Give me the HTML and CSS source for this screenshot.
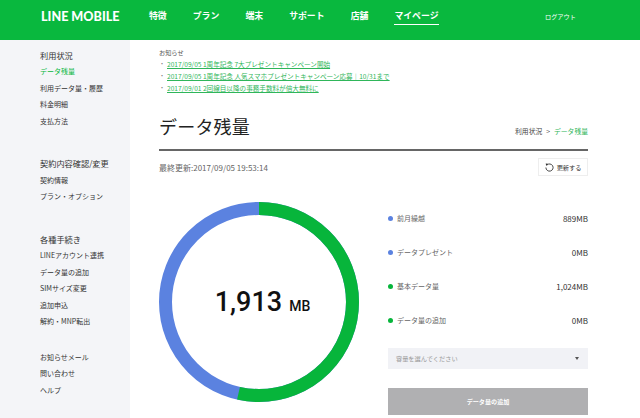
FILE: index.html
```
<!DOCTYPE html>
<html lang="ja">
<head>
<meta charset="utf-8">
<title>データ残量</title>
<link rel="stylesheet" href="styles.css">
</head>
<body>
<header class="header">
  <div class="logo">LINE MOBILE</div>
  <nav class="nav">
    <a>特徴</a><a>プラン</a><a>端末</a><a>サポート</a><a>店舗</a><a class="nav-active">マイページ</a>
  </nav>
  <a class="logout">ログアウト</a>
</header>
<div class="page">
  <aside class="side">
    <section class="side-group">
      <h3>利用状況</h3>
      <a class="cur">データ残量</a><a>利用データ量・履歴</a><a>料金明細</a><a>支払方法</a>
    </section>
    <section class="side-group">
      <h3>契約内容確認/変更</h3>
      <a>契約情報</a><a>プラン・オプション</a>
    </section>
    <section class="side-group side-forms">
      <h3>各種手続き</h3>
      <a>LINEアカウント連携</a><a>データ量の追加</a><a>SIMサイズ変更</a><a>追加申込</a><a>解約・MNP転出</a>
    </section>
    <section class="side-group">
      <a>お知らせメール</a><a>問い合わせ</a><a>ヘルプ</a>
    </section>
  </aside>
  <main class="main">
    <div class="notice">
      <p class="notice-title">お知らせ</p>
      <ul>
        <li><a>2017/09/05 1周年記念 7大プレゼントキャンペーン開始</a></li>
        <li><a>2017/09/05 1周年記念 人気スマホプレゼントキャンペーン応募｜10/31まで</a></li>
        <li><a>2017/09/01 2回線目以降の事務手数料が倍大無料に</a></li>
      </ul>
    </div>
    <div class="title-row">
      <h1>データ残量</h1>
      <div class="crumb"><span>利用状況</span><span class="sep">&gt;</span><span class="crumb-cur">データ残量</span></div>
    </div>
    <div class="update-row">
      <span>最終更新:2017/09/05 19:53:14</span>
      <button class="refresh">
        <svg width="9" height="9" viewBox="0 0 10 10"><path d="M2.2 2.2A4 4 0 1 1 1 5" fill="none" stroke="#333" stroke-width="1"/><path d="M0.8 0.6 L3.4 0.9 L1.4 3.2Z" fill="#333"/></svg>
        更新する
      </button>
    </div>
    <div class="data">
      <div class="ring">
        <svg width="200" height="200" viewBox="0 0 200 200">
          <circle cx="100" cy="100" r="93.5" fill="none" stroke="#5b82e0" stroke-width="13"/>
          <circle cx="100" cy="100" r="93.5" fill="none" stroke="#07b53b" stroke-width="13" pathLength="1913" stroke-dasharray="1024 889" transform="rotate(-90 100 100)"/>
        </svg>
        <div class="total"><div class="total-inner"><b>1,913</b><span>MB</span></div></div>
      </div>
      <div class="panel">
        <div class="row"><span class="dot blue"></span><span class="label">前月繰越</span><span class="val">889MB</span></div>
        <div class="row"><span class="dot blue"></span><span class="label">データプレゼント</span><span class="val">0MB</span></div>
        <div class="row"><span class="dot green"></span><span class="label">基本データ量</span><span class="val">1,024MB</span></div>
        <div class="row"><span class="dot green"></span><span class="label">データ量の追加</span><span class="val">0MB</span></div>
        <div class="select"><span>容量を選んでください</span><i class="caret"></i></div>
        <div class="add">データ量の追加</div>
      </div>
    </div>
  </main>
</div>
</body>
</html>
```
FILE: styles.css
```
* { box-sizing: border-box; }
html, body { margin: 0; height: 418px; overflow: hidden; background: #fff; }
body { font-family: "Noto Sans CJK JP", "Noto Sans", sans-serif; color: #333; font-size: 8px; }
h1, h3, p, ul { margin: 0; padding: 0; }
.header { height: 40px; background: #09b83e; display: flex; align-items: center; color: #fff; padding: 0 0 8px 41px; }
.logo { font-family: "Lato", sans-serif; font-weight: 900; font-size: 12.6px; width: 108px; white-space: nowrap; }
.nav { display: flex; gap: 26px; font-size: 8.9px; font-weight: 700; width: 396px; }
.nav a { line-height: 14px; padding-bottom: 1px; margin-top: 1px; }
.nav .nav-active { border-bottom: 1px solid #fff; }
.logout { font-size: 6.2px; }
.page { display: flex; height: 378px; }
.side { width: 130px; background: #f4f5f8; padding: 7.5px 0 0 40px; display: flex; flex-direction: column; }
.side-group { display: flex; flex-direction: column; margin-bottom: 27px; }
.side-forms { margin-bottom: 19.25px; }
.side-group h3 { font-size: 8.2px; font-weight: 400; line-height: 14px; margin-bottom: 1.5px; color: #333; }
.side-group a { font-size: 7px; line-height: 16.5px; color: #333; white-space: nowrap; }
.side-group .cur { color: #09b83e; }
.main { flex: 1; padding: 7px 52px 0 29px; min-width: 0; }
.notice-title { font-size: 6.2px; line-height: 11px; color: #555; }
.notice ul { list-style: none; margin-top: 0; }
.notice li { font-size: 6.6px; line-height: 12px; padding-left: 8px; position: relative; color: #2fb65a; white-space: nowrap; }
.notice li::before { content: "・"; position: absolute; left: 0; font-size: 6px; color: #777; }
.notice a { text-decoration: underline; }
.title-row { display: flex; justify-content: space-between; align-items: flex-start; margin-top: 17px; height: 38px; }
h1 { font-size: 18px; font-weight: 400; color: #222; line-height: 30px; letter-spacing: 0.2px; }
.crumb { font-size: 6.8px; color: #444; line-height: 10px; margin-top: 15px; display: flex; gap: 4px; }
.crumb-cur { color: #2fb65a; }
.update-row { border-top: 2px solid #666; padding-top: 7px; display: flex; justify-content: space-between; align-items: center; font-size: 8px; color: #666; }
.refresh { width: 50px; height: 18px; border: 1px solid #eee; background: #fff; font: inherit; font-size: 6.2px; color: #333; display: flex; align-items: center; justify-content: center; gap: 3px; padding: 0; }
.data { display: flex; margin-top: 26px; }
.ring { width: 200px; height: 200px; position: relative; flex: none; }
.ring svg { display: block; }
.total { position: absolute; inset: 0; display: flex; align-items: center; justify-content: center; color: #111; padding-left: 7px; }
.total-inner { display: flex; align-items: baseline; gap: 7px; font-family: "Roboto", sans-serif; }
.total b { font-weight: 500; font-size: 27px; }
.total span { font-size: 14px; font-weight: 500; }
.panel { margin-left: 29px; width: 200px; flex: none; display: flex; flex-direction: column; gap: 2px; }
.row { display: flex; align-items: center; height: 32px; font-size: 7px; }
.dot { width: 5px; height: 5px; border-radius: 50%; margin-right: 4px; }
.blue { background: #5b82e0; }
.green { background: #07b53b; }
.label { color: #666; flex: 1; }
.val { color: #333; font-size: 8px; }
.select { height: 21px; background: #f1f2f6; margin-top: 10px; padding: 0 9px 0 8px; display: flex; align-items: center; justify-content: space-between; font-size: 6.2px; color: #999; }
.caret { width: 0; height: 0; border-left: 2.5px solid transparent; border-right: 2.5px solid transparent; border-top: 3px solid #555; }
.add { height: 27px; background: #b0b0b2; margin-top: 17px; color: #fff; font-size: 6.1px; font-weight: 700; display: flex; align-items: center; justify-content: center; }
```
